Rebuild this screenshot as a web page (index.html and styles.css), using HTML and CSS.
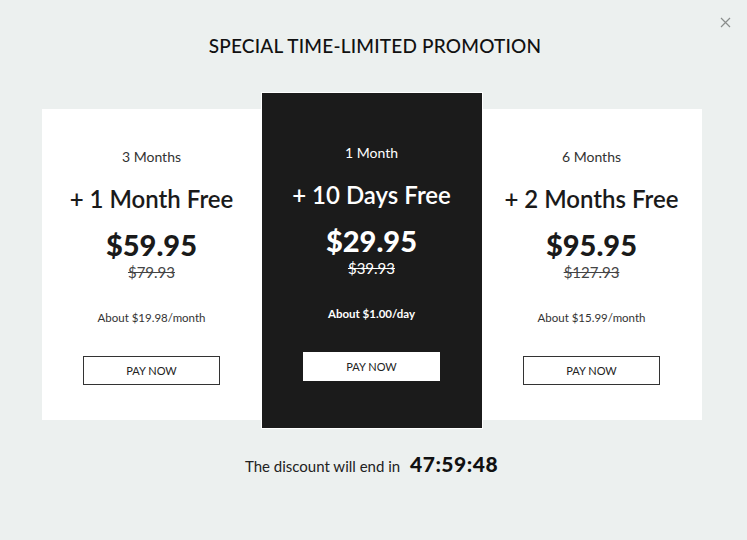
FILE: index.html
```html
<!DOCTYPE html>
<html lang="en">
<head>
<meta charset="UTF-8">
<meta name="viewport" content="width=device-width, initial-scale=1.0">
<title>Special Promotion</title>
<link rel="stylesheet" href="styles.css">
</head>
<body>

<div class="popup">
    <button class="close" aria-label="Close">
        <svg width="11" height="11" viewBox="0 0 11 11"><path d="M1 1L10 10M10 1L1 10" stroke="#8a8d8c" stroke-width="1.2"/></svg>
    </button>

    <h1 class="title">SPECIAL TIME-LIMITED PROMOTION</h1>

    <div class="plans">
        <div class="plan">
            <div class="period">3 Months</div>
            <div class="extra">+ 1 Month Free</div>
            <div class="price">$59.95</div>
            <div class="old">$79.93</div>
            <div class="per">About $19.98/month</div>
            <button class="pay">PAY NOW</button>
        </div>
        <div class="plan featured">
            <div class="period">1 Month</div>
            <div class="extra">+ 10 Days Free</div>
            <div class="price">$29.95</div>
            <div class="old">$39.93</div>
            <div class="per">About $1.00/day</div>
            <button class="pay">PAY NOW</button>
        </div>
        <div class="plan">
            <div class="period">6 Months</div>
            <div class="extra">+ 2 Months Free</div>
            <div class="price">$95.95</div>
            <div class="old">$127.93</div>
            <div class="per">About $15.99/month</div>
            <button class="pay">PAY NOW</button>
        </div>
    </div>

    <p class="countdown">The discount will end in <span class="timer">47:59:48</span></p>
</div>

</body>
</html>
```

FILE: styles.css
```css
body {
    margin: 0;
    padding: 0;
    background-color: #ecf0ef;
    font-family: Lato, "Open Sans", sans-serif;
    color: #1a1a1a;
}

.popup {
    position: relative;
    width: 747px;
    height: 540px;
    box-sizing: border-box;
    padding-top: 35px;
    display: flex;
    flex-direction: column;
    align-items: center;
}

.close {
    position: absolute;
    top: 16px;
    right: 16px;
    background: none;
    border: none;
    padding: 0;
    cursor: pointer;
}

.title {
    margin: 0 0 0 3px;
    font-size: 19px;
    line-height: 22px;
    font-weight: 500;
    letter-spacing: 0.2px;
    color: #111;
}

.plans {
    margin-top: 36px;
    margin-right: 4px;
    display: flex;
    align-items: flex-start;
}

.plan {
    width: 220px;
    height: 311px;
    margin-top: 16px;
    box-sizing: border-box;
    padding-top: 40px;
    background-color: #fff;
    display: flex;
    flex-direction: column;
    align-items: center;
    text-align: center;
}

.plan.featured {
    height: 335px;
    margin-top: 0;
    padding-top: 52px;
    background-color: #1b1b1b;
    color: #fff;
    outline: 1px solid #fff;
}

.period {
    font-size: 14px;
    line-height: 16px;
    color: #333;
}

.extra {
    margin-top: 20px;
    font-size: 24px;
    line-height: 28px;
    font-weight: 600;
}

.price {
    margin-top: 17px;
    font-size: 29px;
    line-height: 30px;
    font-weight: 900;
}

.old {
    margin-top: 3px;
    font-size: 15px;
    line-height: 18px;
    color: #444;
    text-decoration: line-through;
}

.per {
    margin-top: 29px;
    font-size: 11.5px;
    line-height: 16px;
    color: #333;
}

.pay {
    margin-top: 30px;
    width: 137px;
    height: 29px;
    background-color: #fff;
    border: 1px solid #333;
    font-family: inherit;
    font-size: 11px;
    color: #222;
    cursor: pointer;
}

.featured .period,
.featured .old,
.featured .per {
    color: #fff;
}

.featured .per {
    font-weight: 700;
}

.featured .pay {
    border-color: #fff;
}

.countdown {
    margin: 25px 4px 0 0;
    font-size: 15px;
    line-height: 22px;
    color: #222;
}

.timer {
    margin-left: 6px;
    font-size: 21px;
    font-weight: 900;
    color: #111;
    letter-spacing: 0.5px;
}
```
